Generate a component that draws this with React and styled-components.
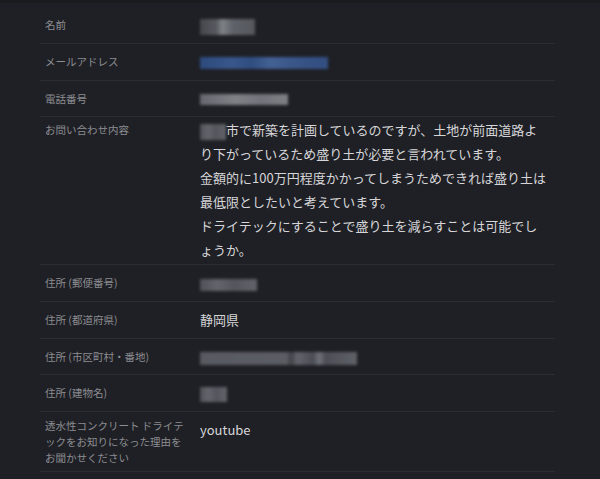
import React from "react";
import styled, { createGlobalStyle } from "styled-components";

const GlobalStyle = createGlobalStyle`
  html, body {
    margin: 0;
    padding: 0;
    background: #1f2025;
  }
  body {
    font-family: "Noto Sans CJK JP", "Noto Sans", sans-serif;
    -webkit-font-smoothing: antialiased;
  }
`;

const StPage = styled.div`
  min-height: 479px;
  border-top: 3px solid #1a1b1f;
  padding: 4.3px 0 0 40px;
  box-sizing: border-box;
`;

const StTable = styled.div`
  width: 515px;
`;

const StRow = styled.div`
  display: grid;
  grid-template-columns: 160px 355px;
  align-items: ${(p) => (p.$top ? "start" : "center")};
  min-height: 35.7px;
  padding: ${(p) => p.$pad || "0"};
  box-sizing: content-box;
  border-bottom: 1px solid #2c2d32;
`;

const StLabel = styled.div`
  padding-left: 5px;
  padding-right: 13px;
  font-size: 10.5px;
  line-height: ${(p) => p.$lh || 24}px;
  color: #8c8d92;
`;

const StValue = styled.div`
  width: 350px;
  font-size: 13px;
  line-height: 24px;
  color: #d6d6d9;
  line-break: loose;
`;

const StBlur = styled.span`
  display: inline-block;
  vertical-align: middle;
  width: ${(p) => p.$w}px;
  height: ${(p) => p.$h || 13}px;
  background: ${(p) => p.$bg};
  filter: blur(1.6px);
  opacity: 0.9;
`;

const grey = "linear-gradient(90deg, #55575e 0%, #6b6d74 30%, #5a5c63 60%, #696b72 100%)";

const rows = [
  {
    label: "名前",
    value: (
      <StBlur
        $w={55}
        $h={16}
        $bg="linear-gradient(90deg, #4a4c52 0%, #5d6066 30%, #8a8e92 40%, #666970 60%, #5b5d63 100%)"
      />
    ),
  },
  {
    label: "メールアドレス",
    value: (
      <StBlur
        $w={128}
        $h={12}
        $bg="linear-gradient(90deg, #2f4f86 0%, #3d5d97 25%, #32528a 40%, #4868a0 55%, #3a5890 80%, #35548c 100%)"
      />
    ),
  },
  {
    label: "電話番号",
    value: (
      <StBlur
        $w={88}
        $h={11}
        $bg="linear-gradient(90deg, #6e7077 0%, #8a8c92 40%, #7b7d84 70%, #888a90 100%)"
      />
    ),
  },
];

const rowsAfter = [
  { label: "住所 (郵便番号)", value: <StBlur $w={57} $h={12} $bg={grey} /> },
  { label: "住所 (都道府県)", value: "静岡県" },
  {
    label: "住所 (市区町村・番地)",
    value: (
      <StBlur
        $w={157}
        $h={13}
        $bg="linear-gradient(90deg, #5f6168 0%, #62646b 55%, #44464c 58%, #6a6c73 62%, #50525a 72%, #7a7c83 76%, #52545b 80%, #676970 100%)"
      />
    ),
  },
  { label: "住所 (建物名)", value: <StBlur $w={27} $h={15} $bg={grey} /> },
];

export default function App() {
  return (
    <>
      <GlobalStyle />
      <StPage>
        <StTable>
          {rows.map((r) => (
            <StRow key={r.label}>
              <StLabel>{r.label}</StLabel>
              <StValue>{r.value}</StValue>
            </StRow>
          ))}
          <StRow $top $pad="1px 0 2px">
            <StLabel>お問い合わせ内容</StLabel>
            <StValue>
              <StBlur $w={26} $h={16} $bg={grey} />
              市で新築を計画しているのですが、土地が前面道路より下がっているため盛り土が必要と言われています。
              <br />
              金額的に100万円程度かかってしまうためできれば盛り土は最低限としたいと考えています。
              <br />
              ドライテックにすることで盛り土を減らすことは可能でしょうか。
            </StValue>
          </StRow>
          {rowsAfter.map((r) => (
            <StRow key={r.label}>
              <StLabel>{r.label}</StLabel>
              <StValue>{r.value}</StValue>
            </StRow>
          ))}
          <StRow $top $pad="6px 0 5px">
            <StLabel $lh={16}>
              透水性コンクリート ドライテックをお知りになった理由をお聞かせください
            </StLabel>
            <StValue>youtube</StValue>
          </StRow>
        </StTable>
      </StPage>
    </>
  );
}
